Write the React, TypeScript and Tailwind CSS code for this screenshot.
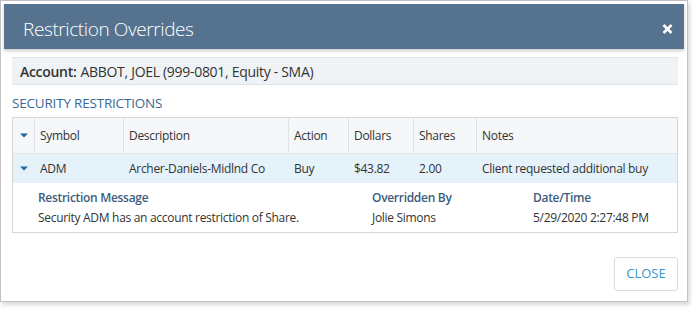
const Caret = () => (
  <svg width="8" height="5" viewBox="0 0 8 5" className="block">
    <path d="M0 0.5 H8 L4 4.5 Z" fill="#1f6ba5" />
  </svg>
);

const cols = [
  { label: "", w: "w-[21px]" },
  { label: "Symbol", w: "w-[89px]" },
  { label: "Description", w: "w-[165px]" },
  { label: "Action", w: "w-[60px]" },
  { label: "Dollars", w: "w-[65px]" },
  { label: "Shares", w: "w-[63px]" },
  { label: "Notes", w: "flex-1" },
];

const row = ["ADM", "Archer-Daniels-Midlnd Co", "Buy", "$43.82", "2.00", "Client requested additional buy"];

const App = () => {
  return (
    <div className="w-[697px] h-[311px] bg-white font-['Open_Sans',sans-serif] text-[#333]">
      <div className="w-[688px] h-[302px] border border-[#c2c2c2] p-[3px] flex flex-col shadow-[2px_3px_4px_rgba(0,0,0,0.15)]">
        <div className="h-[45px] bg-[#55728e] flex items-center justify-between pl-[19px] pr-[11px] pt-[5px] shadow-[0_2px_3px_rgba(0,0,0,0.2)]">
          <h1 className="text-white text-[19px] font-light tracking-[-0.4px]">
            Restriction Overrides
          </h1>
          <svg width="11" height="10" viewBox="0 0 11 10">
            <path d="M1.5 1 L9.5 9 M9.5 1 L1.5 9" stroke="white" strokeWidth="2.6" />
          </svg>
        </div>

        <div className="flex-1 pl-[8px] pr-[6px] pt-[8px] flex flex-col">
          <div className="h-[28px] bg-[#f0f3f6] border-y border-[#dfe4e9] flex items-center px-[8px] text-[14px] tracking-[-0.3px]">
            <span className="font-semibold mr-1">Account:</span>
            ABBOT, JOEL (999-0801, Equity - SMA)
          </div>

          <p className="mt-[10px] text-[13.5px] text-[#3b6a96] leading-[16px] tracking-[-0.2px]">SECURITY RESTRICTIONS</p>

          <div className="mt-[6px] border border-[#d6d6d6] text-[12px] tracking-[-0.3px]">
            <div className="flex h-[36px] bg-[#f5f7f9] border-b border-[#e3e6e9]">
              {cols.map((c, i) => (
                <div
                  key={i}
                  className={`${c.w} flex items-center ${i > 0 ? "border-l border-[#e0e3e6] px-[5px]" : "justify-center"}`}
                >
                  {i === 0 ? <Caret /> : c.label}
                </div>
              ))}
            </div>
            <div className="flex h-[29px] bg-[#e5f2fa]">
              {cols.map((c, i) => (
                <div
                  key={i}
                  className={`${c.w} flex items-center ${i > 0 ? "border-l border-transparent px-[5px]" : "justify-center"}`}
                >
                  {i === 0 ? <Caret /> : row[i - 1]}
                </div>
              ))}
            </div>
            <div className="flex pl-[25px] pt-[5px] pb-[4px]">
              <div className="w-[334px]">
                <p className="font-semibold text-[#3d5c7d] leading-[20px]">Restriction Message</p>
                <p className="leading-[20px]">Security ADM has an account restriction of Share.</p>
              </div>
              <div className="w-[161px]">
                <p className="font-semibold text-[#3d5c7d] leading-[20px]">Overridden By</p>
                <p className="leading-[20px]">Jolie Simons</p>
              </div>
              <div className="flex-1">
                <p className="font-semibold text-[#3d5c7d] leading-[20px]">Date/Time</p>
                <p className="leading-[20px]">5/29/2020 2:27:48 PM</p>
              </div>
            </div>
          </div>

          <div className="flex justify-end mt-[24px]">
            <button className="w-[64px] h-[34px] border border-[#dcdcdc] rounded-[3px] text-[#3a95cc] text-[13px]">
              CLOSE
            </button>
          </div>
        </div>
      </div>
    </div>
  );
};

export default App;
